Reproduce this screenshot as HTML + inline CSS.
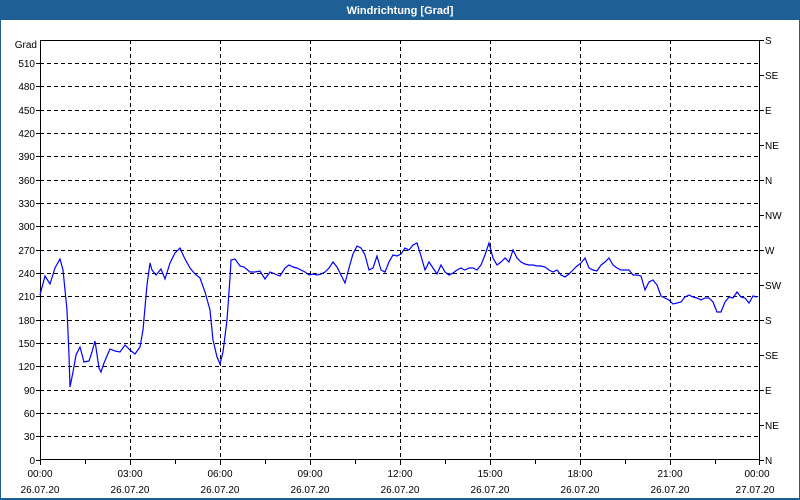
<!DOCTYPE html>
<html><head><meta charset="utf-8"><style>
html,body{margin:0;padding:0;width:800px;height:500px;overflow:hidden;background:#fff;font-family:"Liberation Sans",sans-serif}
</style></head><body>
<svg width="800" height="500" xmlns="http://www.w3.org/2000/svg" style="display:block">
<rect x="0" y="0" width="800" height="500" fill="#1e6096"/>
<rect x="1" y="20" width="798" height="478" fill="#fff"/>
<text x="400" y="14" fill="#fff" font-size="11" font-weight="bold" text-anchor="middle" font-family="Liberation Sans,sans-serif">Windrichtung [Grad]</text>
<g stroke="#000" stroke-dasharray="4,3" stroke-width="1">
<line x1="40" x2="760" y1="63.5" y2="63.5"/><line x1="40" x2="760" y1="86.5" y2="86.5"/><line x1="40" x2="760" y1="110.5" y2="110.5"/><line x1="40" x2="760" y1="133.5" y2="133.5"/><line x1="40" x2="760" y1="156.5" y2="156.5"/><line x1="40" x2="760" y1="180.5" y2="180.5"/><line x1="40" x2="760" y1="203.5" y2="203.5"/><line x1="40" x2="760" y1="226.5" y2="226.5"/><line x1="40" x2="760" y1="250.5" y2="250.5"/><line x1="40" x2="760" y1="273.5" y2="273.5"/><line x1="40" x2="760" y1="296.5" y2="296.5"/><line x1="40" x2="760" y1="320.5" y2="320.5"/><line x1="40" x2="760" y1="343.5" y2="343.5"/><line x1="40" x2="760" y1="366.5" y2="366.5"/><line x1="40" x2="760" y1="390.5" y2="390.5"/><line x1="40" x2="760" y1="413.5" y2="413.5"/><line x1="40" x2="760" y1="436.5" y2="436.5"/>
<line x1="130.5" x2="130.5" y1="40" y2="460"/><line x1="220.5" x2="220.5" y1="40" y2="460"/><line x1="310.5" x2="310.5" y1="40" y2="460"/><line x1="400.5" x2="400.5" y1="40" y2="460"/><line x1="490.5" x2="490.5" y1="40" y2="460"/><line x1="580.5" x2="580.5" y1="40" y2="460"/><line x1="670.5" x2="670.5" y1="40" y2="460"/>
</g>
<rect x="40.5" y="40.5" width="719" height="419" fill="none" stroke="#000"/>
<g stroke="#000">
<line x1="36" x2="40" y1="63.5" y2="63.5"/><line x1="36" x2="40" y1="86.5" y2="86.5"/><line x1="36" x2="40" y1="110.5" y2="110.5"/><line x1="36" x2="40" y1="133.5" y2="133.5"/><line x1="36" x2="40" y1="156.5" y2="156.5"/><line x1="36" x2="40" y1="180.5" y2="180.5"/><line x1="36" x2="40" y1="203.5" y2="203.5"/><line x1="36" x2="40" y1="226.5" y2="226.5"/><line x1="36" x2="40" y1="250.5" y2="250.5"/><line x1="36" x2="40" y1="273.5" y2="273.5"/><line x1="36" x2="40" y1="296.5" y2="296.5"/><line x1="36" x2="40" y1="320.5" y2="320.5"/><line x1="36" x2="40" y1="343.5" y2="343.5"/><line x1="36" x2="40" y1="366.5" y2="366.5"/><line x1="36" x2="40" y1="390.5" y2="390.5"/><line x1="36" x2="40" y1="413.5" y2="413.5"/><line x1="36" x2="40" y1="436.5" y2="436.5"/><line x1="36" x2="40" y1="460.5" y2="460.5"/>
<line x1="760" x2="764" y1="40.5" y2="40.5"/><line x1="760" x2="764" y1="75.5" y2="75.5"/><line x1="760" x2="764" y1="110.5" y2="110.5"/><line x1="760" x2="764" y1="145.5" y2="145.5"/><line x1="760" x2="764" y1="180.5" y2="180.5"/><line x1="760" x2="764" y1="215.5" y2="215.5"/><line x1="760" x2="764" y1="250.5" y2="250.5"/><line x1="760" x2="764" y1="285.5" y2="285.5"/><line x1="760" x2="764" y1="320.5" y2="320.5"/><line x1="760" x2="764" y1="355.5" y2="355.5"/><line x1="760" x2="764" y1="390.5" y2="390.5"/><line x1="760" x2="764" y1="425.5" y2="425.5"/><line x1="760" x2="764" y1="460.5" y2="460.5"/>
<line x1="40.5" x2="40.5" y1="460" y2="465"/><line x1="85.5" x2="85.5" y1="460" y2="464"/><line x1="130.5" x2="130.5" y1="460" y2="465"/><line x1="175.5" x2="175.5" y1="460" y2="464"/><line x1="220.5" x2="220.5" y1="460" y2="465"/><line x1="265.5" x2="265.5" y1="460" y2="464"/><line x1="310.5" x2="310.5" y1="460" y2="465"/><line x1="355.5" x2="355.5" y1="460" y2="464"/><line x1="400.5" x2="400.5" y1="460" y2="465"/><line x1="445.5" x2="445.5" y1="460" y2="464"/><line x1="490.5" x2="490.5" y1="460" y2="465"/><line x1="535.5" x2="535.5" y1="460" y2="464"/><line x1="580.5" x2="580.5" y1="460" y2="465"/><line x1="625.5" x2="625.5" y1="460" y2="464"/><line x1="670.5" x2="670.5" y1="460" y2="465"/><line x1="715.5" x2="715.5" y1="460" y2="464"/><line x1="759.5" x2="759.5" y1="460" y2="465"/>
</g>
<g font-size="10" fill="#000" text-anchor="end" font-family="Liberation Sans,sans-serif">
<text x="37" y="48">Grad</text><text x="35" y="67">510</text><text x="35" y="90">480</text><text x="35" y="114">450</text><text x="35" y="137">420</text><text x="35" y="160">390</text><text x="35" y="184">360</text><text x="35" y="207">330</text><text x="35" y="230">300</text><text x="35" y="254">270</text><text x="35" y="277">240</text><text x="35" y="300">210</text><text x="35" y="324">180</text><text x="35" y="347">150</text><text x="35" y="370">120</text><text x="35" y="394">90</text><text x="35" y="417">60</text><text x="35" y="440">30</text><text x="35" y="464">0</text>
</g>
<g font-size="10" fill="#000" font-family="Liberation Sans,sans-serif">
<text x="765" y="44">S</text><text x="765" y="79">SE</text><text x="765" y="114">E</text><text x="765" y="149">NE</text><text x="765" y="184">N</text><text x="765" y="219">NW</text><text x="765" y="254">W</text><text x="765" y="289">SW</text><text x="765" y="324">S</text><text x="765" y="359">SE</text><text x="765" y="394">E</text><text x="765" y="429">NE</text><text x="765" y="464">N</text>
</g>
<g font-size="10" fill="#000" text-anchor="middle" font-family="Liberation Sans,sans-serif">
<text x="40" y="477">00:00</text><text x="40" y="493">26.07.20</text>
<text x="130" y="477">03:00</text><text x="130" y="493">26.07.20</text>
<text x="220" y="477">06:00</text><text x="220" y="493">26.07.20</text>
<text x="310" y="477">09:00</text><text x="310" y="493">26.07.20</text>
<text x="400" y="477">12:00</text><text x="400" y="493">26.07.20</text>
<text x="490" y="477">15:00</text><text x="490" y="493">26.07.20</text>
<text x="580" y="477">18:00</text><text x="580" y="493">26.07.20</text>
<text x="670" y="477">21:00</text><text x="670" y="493">26.07.20</text>
<text x="757" y="477">00:00</text><text x="755" y="493">27.07.20</text>
</g>
<polyline fill="none" stroke="#0000ff" stroke-width="1.2" points="40,295 45,276 50,284 55,268 60,259 63,270 67,310 69,355 70,387 73,372 76,355 80,347 84,362 89,361 92,352 95,341 99,368 101,372 104,363 110,349 115,351 120,352 125,345 130,350 135,354 140,347 143,330 147,285 150,263 152,270 156,275 161,269 165,279 170,263 175,253 180,248 184,257 190,268 195,274 200,278 205,292 210,310 213,340 217,357 220,364 223,352 227,320 230,278 231,260 235,259 240,266 244,267 250,272 255,272 260,271 265,279 270,272 275,274 280,276 285,268 289,265 293,267 297,268 301,270 305,272 309,275 313,274 317,275 321,274 325,272 329,268 333,262 337,267 341,275 345,283 349,268 353,254 357,246 361,248 365,255 369,270 373,268 377,256 381,270 385,272 389,262 393,255 397,256 401,254 405,248 409,250 413,245 417,243 421,256 425,270 429,262 433,268 437,274 441,265 445,272 449,275 453,273 457,270 461,268 465,270 469,268 473,268 477,270 481,265 485,255 489,243 493,258 497,265 501,262 505,258 509,262 513,250 517,258 521,262 525,264 529,265 533,265 537,266 541,266 545,267 549,270 553,272 557,270 561,275 565,277 569,274 573,270 577,266 581,263 585,258 589,268 593,270 597,271 601,265 605,262 609,258 613,265 617,268 621,270 625,270 629,270 633,275 637,275 641,276 645,290 649,282 653,280 657,285 661,296 665,298 669,300 673,304 677,303 681,302 685,297 689,295 693,297 697,298 701,300 705,298 709,298 713,302 717,312 721,312 725,302 729,297 733,298 737,292 741,297 745,298 749,303 753,296 757,297"/>
</svg>
</body></html>
